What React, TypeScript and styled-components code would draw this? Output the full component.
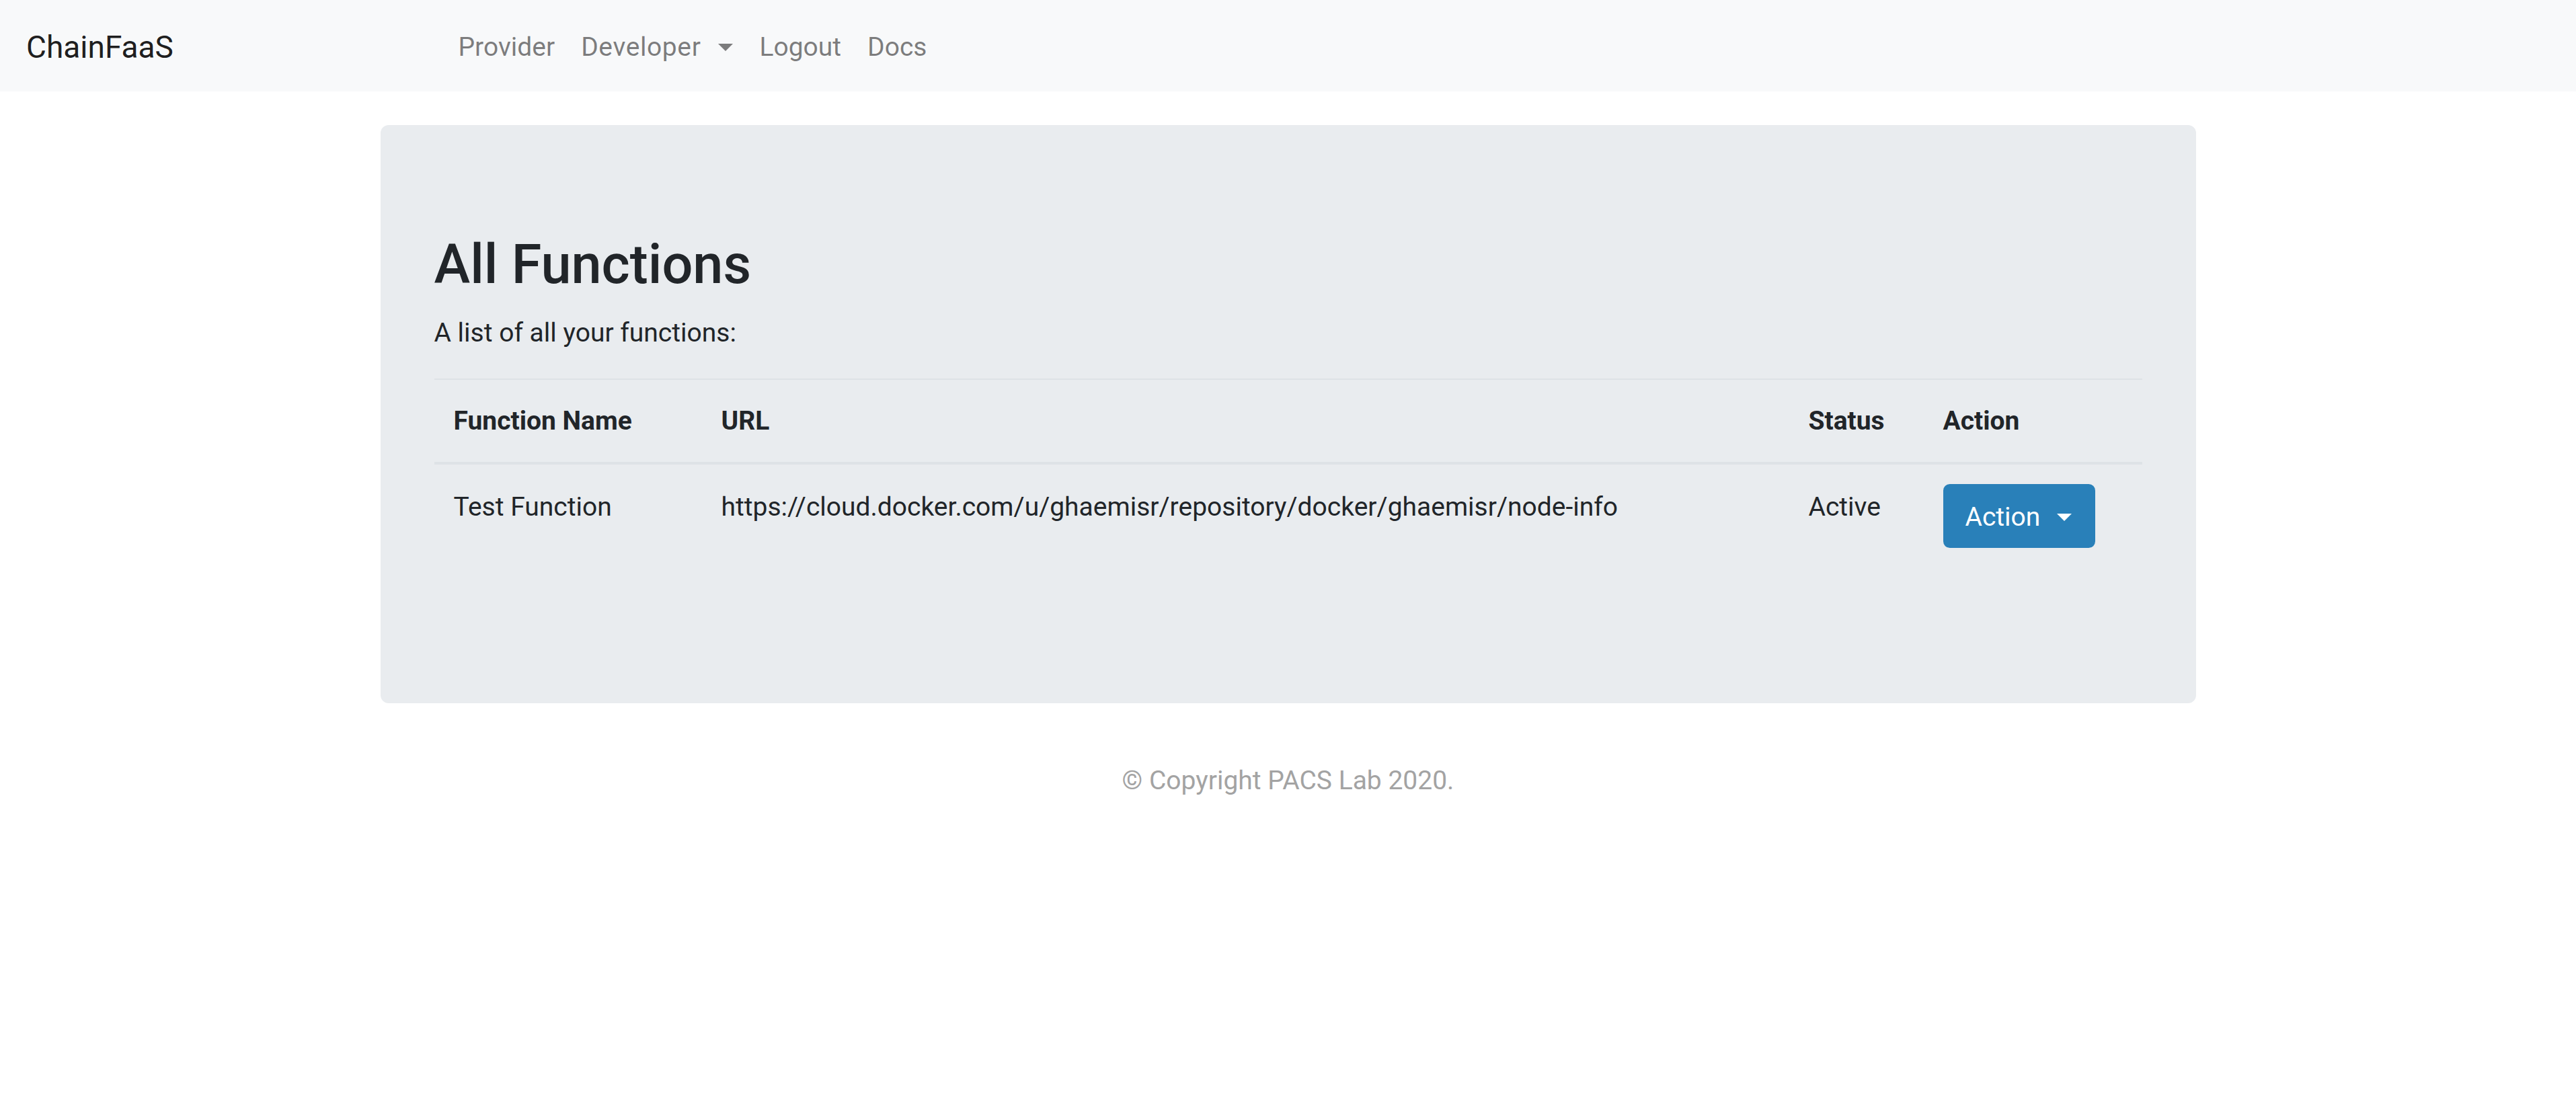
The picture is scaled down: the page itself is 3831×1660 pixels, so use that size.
import React from 'react';
import styled, { createGlobalStyle } from 'styled-components';

const GlobalStyle = createGlobalStyle`
  * {
    box-sizing: border-box;
  }
  body {
    margin: 0;
    background: #fff;
    color: #212529;
    font-family: Roboto, "Liberation Sans", Arial, sans-serif;
    font-size: 39px;
    line-height: 1.5;
  }
`;

interface FunctionRow {
  name: string;
  url: string;
  status: string;
}

const functions: FunctionRow[] = [
  {
    name: 'Test Function',
    url: 'https://cloud.docker.com/u/ghaemisr/repository/docker/ghaemisr/node-info',
    status: 'Active',
  },
];

const columns = [
  { label: 'Function Name', width: 398 },
  { label: 'URL', width: 1617 },
  { label: 'Status', width: 200 },
  { label: 'Action', width: 325 },
];

const App = () => {
  return (
    <>
      <GlobalStyle />
      <Navbar>
        <Brand href="#">ChainFaaS</Brand>
        <NavList>
          <NavLink href="#">Provider</NavLink>
          <NavLink href="#" $spacing={0.6}>
            Developer
            <Caret $gap={26} />
          </NavLink>
          <NavLink href="#">Logout</NavLink>
          <NavLink href="#">Docs</NavLink>
        </NavList>
      </Navbar>

      <Container>
        <Jumbotron>
          <Title>All Functions</Title>
          <Lead>A list of all your functions:</Lead>
          <Table>
            <thead>
              <tr>
                {columns.map((c) => (
                  <HeadCell key={c.label} $width={c.width}>
                    {c.label}
                  </HeadCell>
                ))}
              </tr>
            </thead>
            <tbody>
              {functions.map((f) => (
                <tr key={f.name}>
                  <Cell $top={34}>{f.name}</Cell>
                  <Cell $top={34}>{f.url}</Cell>
                  <Cell $top={34}>{f.status}</Cell>
                  <Cell $top={29}>
                    <ActionButton type="button">
                      Action
                      <Caret $gap={25} />
                    </ActionButton>
                  </Cell>
                </tr>
              ))}
            </tbody>
          </Table>
        </Jumbotron>
      </Container>

      <Footer>© Copyright PACS Lab 2020.</Footer>
    </>
  );
};

export default App;

const Navbar = styled.nav`
  display: flex;
  align-items: center;
  height: 136px;
  padding: 0 39px;
  background: #f8f9fa;
`;

const Brand = styled.a`
  width: 584px;
  margin-right: 39px;
  padding-top: 4px;
  font-size: 46px;
  line-height: 1.5;
  color: rgba(0, 0, 0, 0.9);
  text-decoration: none;
  white-space: nowrap;
`;

const NavList = styled.div`
  display: flex;
  align-items: center;
`;

const NavLink = styled.a<{ $spacing?: number }>`
  display: flex;
  align-items: center;
  padding: 22px 19.5px 17px;
  color: rgba(0, 0, 0, 0.5);
  letter-spacing: ${(p) => p.$spacing ?? 0}px;
  text-decoration: none;
`;

const Caret = styled.span<{ $gap: number }>`
  display: inline-block;
  margin-left: ${(p) => p.$gap}px;
  border-top: 11.7px solid currentColor;
  border-right: 11.7px solid transparent;
  border-left: 11.7px solid transparent;
  border-bottom: 0;
`;

const Container = styled.div`
  width: 2700px;
  margin: 50px auto 0;
`;

const Jumbotron = styled.div`
  padding: 156px 80px;
  margin-bottom: 78px;
  background: #e9ecef;
  border-radius: 12px;
`;

const Title = styled.h2`
  margin: 0 0 19.5px;
  font-size: 81px;
  font-weight: 500;
  line-height: 104px;
`;

const Lead = styled.p`
  margin: 0 0 39px;
`;

const Table = styled.table`
  width: 100%;
  margin-bottom: 39px;
  border-collapse: collapse;
  table-layout: fixed;
  color: #212529;
`;

const HeadCell = styled.th<{ $width: number }>`
  width: ${(p) => p.$width}px;
  padding: 32px 29px 31px;
  text-align: left;
  font-weight: 700;
  vertical-align: bottom;
  border-top: 2.4px solid #dee2e6;
  border-bottom: 4.9px solid #dee2e6;
`;

const Cell = styled.td<{ $top: number }>`
  padding: ${(p) => p.$top}px 29px 36px;
  vertical-align: top;
  white-space: nowrap;
  border-top: 2.4px solid #dee2e6;
`;

const ActionButton = styled.button`
  display: inline-flex;
  align-items: center;
  height: 95px;
  padding: 4px 33px 0 31px;
  border: 2.4px solid #2980b9;
  border-radius: 9.7px;
  background: #2980b9;
  color: #fff;
  font-family: inherit;
  font-size: 39px;
  line-height: 1.5;
  cursor: pointer;
`;

const Footer = styled.footer`
  padding-top: 8px;
  text-align: center;
  color: #a3a3a3;
`;
